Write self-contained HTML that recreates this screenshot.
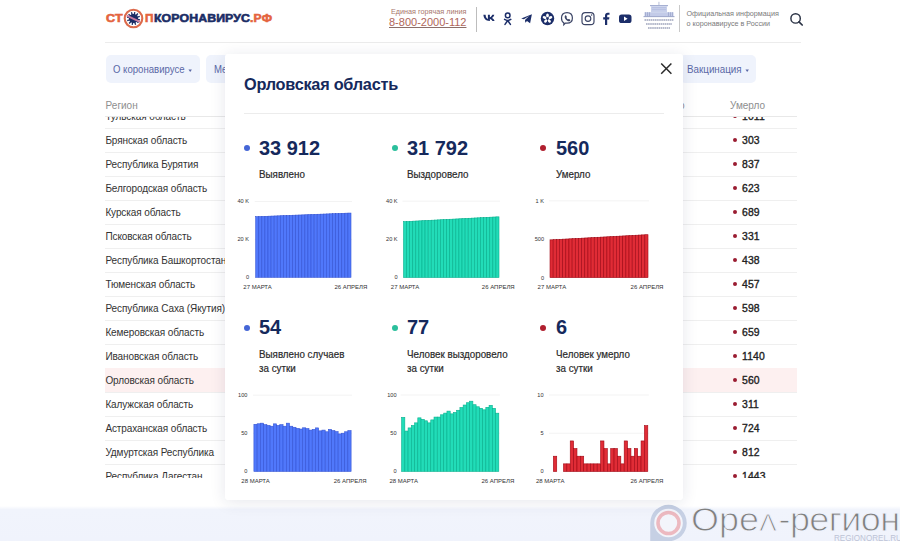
<!DOCTYPE html>
<html><head><meta charset="utf-8"><style>
html,body{margin:0;padding:0;width:900px;height:541px;overflow:hidden;background:#fff;font-family:"Liberation Sans", sans-serif;}
.t{position:absolute;white-space:nowrap;}
.r,.a{position:absolute;}
</style></head><body>
<div class="r" style="left:105px;top:42px;width:696px;height:1px;background:#ececec;"></div>
<div class="t" style="left:105.50px;top:12.82px;font-size:11.2px;line-height:11.2px;font-weight:700;color:#e4643f;letter-spacing:0.3px;transform:scaleX(1.12);transform-origin:0 0;-webkit-text-stroke:0.6px #e4643f">СТ</div>
<div class="t" style="left:145.30px;top:12.82px;font-size:11.2px;line-height:11.2px;font-weight:700;color:#e4643f;transform:scaleX(1.05);transform-origin:0 0;-webkit-text-stroke:0.6px #e4643f">П</div>
<div class="t" style="left:154.00px;top:12.82px;font-size:11.2px;line-height:11.2px;font-weight:700;color:#1b2d66;letter-spacing:0.1px;transform:scaleX(1.1);transform-origin:0 0;-webkit-text-stroke:0.6px #1b2d66">КОРОНАВИРУС</div>
<div class="t" style="left:249.50px;top:12.82px;font-size:11.2px;line-height:11.2px;font-weight:700;color:#e4643f;letter-spacing:0.2px;transform:scaleX(1.08);transform-origin:0 0;-webkit-text-stroke:0.6px #e4643f">.РФ</div>
<svg class="a" style="left:122.8px;top:7.6px" width="21" height="21" viewBox="0 0 21 21">
<circle cx="10.5" cy="10.5" r="8.8" fill="#fff" stroke="#dc6a4c" stroke-width="2.1"/>
<circle cx="10.5" cy="10.5" r="4.6" fill="#1b2d66"/>
<g stroke="#1b2d66" stroke-width="1.3"><line x1="10.5" y1="10.5" x2="16.97" y2="11.81"/><line x1="10.5" y1="10.5" x2="15.45" y2="14.87"/><line x1="10.5" y1="10.5" x2="12.60" y2="16.76"/><line x1="10.5" y1="10.5" x2="9.19" y2="16.97"/><line x1="10.5" y1="10.5" x2="6.13" y2="15.45"/><line x1="10.5" y1="10.5" x2="4.24" y2="12.60"/><line x1="10.5" y1="10.5" x2="4.03" y2="9.19"/><line x1="10.5" y1="10.5" x2="5.55" y2="6.13"/><line x1="10.5" y1="10.5" x2="8.40" y2="4.24"/><line x1="10.5" y1="10.5" x2="11.81" y2="4.03"/><line x1="10.5" y1="10.5" x2="14.87" y2="5.55"/><line x1="10.5" y1="10.5" x2="16.76" y2="8.40"/></g>
<line x1="3.8" y1="7.6" x2="17" y2="13.8" stroke="#c77aa0" stroke-width="1.9"/>
</svg>
<div class="t" style="left:391.00px;top:7.83px;font-size:8px;line-height:8px;font-weight:400;color:#a8766c;transform:scaleX(0.905);transform-origin:0 0">Единая горячая линия</div>
<div class="t" style="left:389.00px;top:16.79px;font-size:11px;line-height:11px;font-weight:400;color:#b0665a;text-decoration:underline;text-decoration-color:#8c6e6a;text-underline-offset:1px">8-800-2000-112</div>
<div class="r" style="left:476px;top:7px;width:1px;height:25px;background:#bdbdbd;"></div>
<svg class="a" style="left:480px;top:8px" width="160" height="22" viewBox="480 8 160 22">
<g fill="#1c2e69">
<path d="M483.4 14.8h2.2c.1 2.8 1.3 4 2.3 4.2v-4.2h2v2.4c1-.1 2-1.2 2.4-2.4h2c-.3 1.5-1.4 2.6-2.2 3.1.8.4 2 1.4 2.5 3.1h-2.2c-.4-1.1-1.4-2-2.5-2.1v2.1h-.3c-3.8 0-6-2.6-6.2-6.2z"/>
</g>
<g fill="none" stroke="#1c2e69" stroke-width="1.5" stroke-linecap="round">
<circle cx="507.7" cy="15.4" r="2.3"/>
<path d="M504.6 19.4c2 1.3 4.2 1.3 6.2 0M507.7 20.5l-2.7 3.9M507.7 20.5l2.7 3.9"/>
</g>
<path fill="#1c2e69" d="M521.2 18.6l10.7-4.3-1.8 8.9-3.1-2.3-1.7 1.8-.3-2.7 4.1-3.9-5.2 3.2z"/>
<circle cx="547.5" cy="18.5" r="6.7" fill="#1c2e69"/>
<g fill="#fff"><ellipse cx="547.50" cy="15.40" rx="1.9" ry="1.35" transform="rotate(-90.0 547.50 15.40)"/><ellipse cx="550.45" cy="17.54" rx="1.9" ry="1.35" transform="rotate(-18.0 550.45 17.54)"/><ellipse cx="549.32" cy="21.01" rx="1.9" ry="1.35" transform="rotate(54.0 549.32 21.01)"/><ellipse cx="545.68" cy="21.01" rx="1.9" ry="1.35" transform="rotate(126.0 545.68 21.01)"/><ellipse cx="544.55" cy="17.54" rx="1.9" ry="1.35" transform="rotate(198.0 544.55 17.54)"/></g>
<g fill="none" stroke="#3c4566" stroke-width="1.2">
<path d="M567 12.6c3.2 0 5.4 1.5 5.4 5.4s-2.2 5.2-5.4 5.2c-.6 0-1.1 0-1.6-.1l-1.6 1.6v-2c-1.6-.8-2.3-2.3-2.3-4.7 0-3.9 2.3-5.4 5.5-5.4z"/>
<rect x="582" y="12.6" width="12" height="12" rx="3.2"/>
<circle cx="588" cy="18.6" r="2.8"/>
</g>
<path fill="#3c4566" d="M565.2 15.6c.4-.4.8-.3 1 .1l.6 1c.2.4 0 .7-.3 1 .3.8.9 1.4 1.6 1.7.3-.3.6-.5 1-.3l1 .6c.4.2.4.6 0 1-.6.6-1.2.8-2 .5-1.6-.7-2.8-2-3.4-3.6-.2-.7 0-1.4.5-2z"/>
<circle cx="591.6" cy="15" r=".8" fill="#3c4566"/>
<path fill="#1c2e69" d="M605 25v-5.5h-1.8v-2.2h1.8v-1.7c0-1.9 1.1-2.9 2.8-2.9.8 0 1.5.1 1.7.1v2h-1.2c-.9 0-1.1.4-1.1 1.1v1.4h2.2l-.3 2.2h-1.9V25z"/>
<rect x="619" y="14.5" width="12.5" height="8.6" rx="2.6" fill="#1c2e69"/>
<path fill="#fff" d="M624 16.6v4.4l3.6-2.2z"/>
</svg>
<svg class="a" style="left:642px;top:0px" width="34" height="32" viewBox="0 0 34 32">
<rect x="16.6" y="1.8" width="0.7" height="3.4" fill="#9aa4c8"/>
<rect x="8" y="5" width="18" height="1.2" fill="#a6b0d2"/>
<rect x="9" y="6.2" width="16" height="6" fill="#c8d0ea"/>
<g fill="#aeb8dc"><rect x="10" y="7.4" width="14" height="0.7"/><rect x="10" y="9.4" width="14" height="0.7"/></g>
<rect x="2.5" y="12.2" width="29" height="4" fill="#c3cbe8"/>
<g fill="#98a3c8"><rect x="3.3" y="12.2" width="0.7" height="4"/><rect x="5.3" y="12.2" width="0.7" height="4"/><rect x="7.3" y="12.2" width="0.7" height="4"/><rect x="26" y="12.2" width="0.7" height="4"/><rect x="28" y="12.2" width="0.7" height="4"/><rect x="30" y="12.2" width="0.7" height="4"/></g>
<rect x="1.5" y="16.2" width="31" height="0.9" fill="#8f9bc2"/>
<g stroke="#9ea4bc" stroke-width="1.5" stroke-dasharray="1.6 0.5">
<line x1="2.5" y1="20" x2="31.5" y2="20"/>
<line x1="4" y1="24" x2="30" y2="24"/>
<line x1="6" y1="28" x2="28" y2="28"/></g>
</svg>
<div class="r" style="left:679px;top:5px;width:1px;height:27px;background:#c9c9c9;"></div>
<div class="t" style="left:686.50px;top:9.81px;font-size:7.2px;line-height:7.2px;font-weight:400;color:#7a7a7a;">Официальная информация</div>
<div class="t" style="left:686.50px;top:20.31px;font-size:7.2px;line-height:7.2px;font-weight:400;color:#7a7a7a;">о коронавирусе в России</div>
<svg class="a" style="left:788px;top:11px" width="18" height="18" viewBox="0 0 18 18">
<circle cx="7.6" cy="7.4" r="4.7" fill="none" stroke="#2b3345" stroke-width="1.45"/>
<line x1="11" y1="10.8" x2="14.2" y2="14" stroke="#2b3345" stroke-width="1.7" stroke-linecap="round"/>
</svg>
<div class="r" style="left:106px;top:55px;width:94px;height:28px;background:#eff3fc;border-radius:5px"></div>
<div class="t" style="left:113.00px;top:63.83px;font-size:10.6px;line-height:10.6px;font-weight:400;color:#5a68a6;transform:scaleX(0.905);transform-origin:0 0">О коронавирусе</div>
<svg class="a" style="left:187px;top:68px" width="6" height="5"><path d="M1.5 1.5h3.4l-1.7 2.4z" fill="#5a68a6"/></svg>
<div class="r" style="left:206px;top:55px;width:120px;height:28px;background:#eff3fc;border-radius:5px"></div>
<div class="t" style="left:214.00px;top:63.83px;font-size:10.6px;line-height:10.6px;font-weight:400;color:#5a68a6;transform:scaleX(0.905);transform-origin:0 0">Меры</div>
<div class="r" style="left:680px;top:55px;width:76px;height:28px;background:#eff3fc;border-radius:5px"></div>
<div class="t" style="left:687.40px;top:63.83px;font-size:10.6px;line-height:10.6px;font-weight:400;color:#5a68a6;transform:scaleX(0.925);transform-origin:0 0">Вакцинация</div>
<svg class="a" style="left:744px;top:68px" width="6" height="5"><path d="M1.5 1.5h3.4l-1.7 2.4z" fill="#5a68a6"/></svg>
<div class="t" style="left:105.60px;top:100.53px;font-size:10px;line-height:10px;font-weight:400;color:#8e8e8e;">Регион</div>
<div class="t" style="left:622.00px;top:100.53px;font-size:10px;line-height:10px;font-weight:400;color:#8e8e8e;">Выздоровело</div>
<div class="t" style="left:730.00px;top:100.53px;font-size:10px;line-height:10px;font-weight:400;color:#8e8e8e;">Умерло</div>
<div class="r" style="left:105px;top:116px;width:692px;height:1px;background:#e8e8e8;"></div>
<div class="a" style="left:0;top:117px;width:900px;height:361px;overflow:hidden">
<div class="r" style="left:105px;top:11px;width:692px;height:1px;background:#efefef"></div>
<div class="t" style="left:105.4px;top:-5.46px;font-size:10px;line-height:10px;color:#333;letter-spacing:-0.1px">Тульская область</div>
<div class="r" style="left:732.6px;top:-2.5999999999999996px;width:4px;height:4px;border-radius:50%;background:#9a1c31"></div>
<div class="t" style="left:742px;top:-5.46px;font-size:10.4px;line-height:10px;font-weight:400;color:#222;-webkit-text-stroke:0.35px #222;letter-spacing:0.15px">1011</div>
<div class="r" style="left:105px;top:35px;width:692px;height:1px;background:#efefef"></div>
<div class="t" style="left:105.4px;top:18.54px;font-size:10px;line-height:10px;color:#333;letter-spacing:-0.1px">Брянская область</div>
<div class="r" style="left:732.6px;top:21.4px;width:4px;height:4px;border-radius:50%;background:#9a1c31"></div>
<div class="t" style="left:742px;top:18.54px;font-size:10.4px;line-height:10px;font-weight:400;color:#222;-webkit-text-stroke:0.35px #222;letter-spacing:0.15px">303</div>
<div class="r" style="left:105px;top:59px;width:692px;height:1px;background:#efefef"></div>
<div class="t" style="left:105.4px;top:42.53px;font-size:10px;line-height:10px;color:#333;letter-spacing:-0.1px">Республика Бурятия</div>
<div class="r" style="left:732.6px;top:45.4px;width:4px;height:4px;border-radius:50%;background:#9a1c31"></div>
<div class="t" style="left:742px;top:42.53px;font-size:10.4px;line-height:10px;font-weight:400;color:#222;-webkit-text-stroke:0.35px #222;letter-spacing:0.15px">837</div>
<div class="r" style="left:105px;top:83px;width:692px;height:1px;background:#efefef"></div>
<div class="t" style="left:105.4px;top:66.53px;font-size:10px;line-height:10px;color:#333;letter-spacing:-0.1px">Белгородская область</div>
<div class="r" style="left:732.6px;top:69.4px;width:4px;height:4px;border-radius:50%;background:#9a1c31"></div>
<div class="t" style="left:742px;top:66.53px;font-size:10.4px;line-height:10px;font-weight:400;color:#222;-webkit-text-stroke:0.35px #222;letter-spacing:0.15px">623</div>
<div class="r" style="left:105px;top:107px;width:692px;height:1px;background:#efefef"></div>
<div class="t" style="left:105.4px;top:90.53px;font-size:10px;line-height:10px;color:#333;letter-spacing:-0.1px">Курская область</div>
<div class="r" style="left:732.6px;top:93.4px;width:4px;height:4px;border-radius:50%;background:#9a1c31"></div>
<div class="t" style="left:742px;top:90.53px;font-size:10.4px;line-height:10px;font-weight:400;color:#222;-webkit-text-stroke:0.35px #222;letter-spacing:0.15px">689</div>
<div class="r" style="left:105px;top:131px;width:692px;height:1px;background:#efefef"></div>
<div class="t" style="left:105.4px;top:114.53px;font-size:10px;line-height:10px;color:#333;letter-spacing:-0.1px">Псковская область</div>
<div class="r" style="left:732.6px;top:117.4px;width:4px;height:4px;border-radius:50%;background:#9a1c31"></div>
<div class="t" style="left:742px;top:114.53px;font-size:10.4px;line-height:10px;font-weight:400;color:#222;-webkit-text-stroke:0.35px #222;letter-spacing:0.15px">331</div>
<div class="r" style="left:105px;top:155px;width:692px;height:1px;background:#efefef"></div>
<div class="t" style="left:105.4px;top:138.53px;font-size:10px;line-height:10px;color:#333;letter-spacing:-0.1px">Республика Башкортостан</div>
<div class="r" style="left:732.6px;top:141.4px;width:4px;height:4px;border-radius:50%;background:#9a1c31"></div>
<div class="t" style="left:742px;top:138.53px;font-size:10.4px;line-height:10px;font-weight:400;color:#222;-webkit-text-stroke:0.35px #222;letter-spacing:0.15px">438</div>
<div class="r" style="left:105px;top:179px;width:692px;height:1px;background:#efefef"></div>
<div class="t" style="left:105.4px;top:162.53px;font-size:10px;line-height:10px;color:#333;letter-spacing:-0.1px">Тюменская область</div>
<div class="r" style="left:732.6px;top:165.4px;width:4px;height:4px;border-radius:50%;background:#9a1c31"></div>
<div class="t" style="left:742px;top:162.53px;font-size:10.4px;line-height:10px;font-weight:400;color:#222;-webkit-text-stroke:0.35px #222;letter-spacing:0.15px">457</div>
<div class="r" style="left:105px;top:203px;width:692px;height:1px;background:#efefef"></div>
<div class="t" style="left:105.4px;top:186.53px;font-size:10px;line-height:10px;color:#333;letter-spacing:-0.1px">Республика Саха (Якутия)</div>
<div class="r" style="left:732.6px;top:189.4px;width:4px;height:4px;border-radius:50%;background:#9a1c31"></div>
<div class="t" style="left:742px;top:186.53px;font-size:10.4px;line-height:10px;font-weight:400;color:#222;-webkit-text-stroke:0.35px #222;letter-spacing:0.15px">598</div>
<div class="r" style="left:105px;top:227px;width:692px;height:1px;background:#efefef"></div>
<div class="t" style="left:105.4px;top:210.53px;font-size:10px;line-height:10px;color:#333;letter-spacing:-0.1px">Кемеровская область</div>
<div class="r" style="left:732.6px;top:213.4px;width:4px;height:4px;border-radius:50%;background:#9a1c31"></div>
<div class="t" style="left:742px;top:210.53px;font-size:10.4px;line-height:10px;font-weight:400;color:#222;-webkit-text-stroke:0.35px #222;letter-spacing:0.15px">659</div>
<div class="r" style="left:105px;top:251px;width:692px;height:1px;background:#efefef"></div>
<div class="t" style="left:105.4px;top:234.53px;font-size:10px;line-height:10px;color:#333;letter-spacing:-0.1px">Ивановская область</div>
<div class="r" style="left:732.6px;top:237.4px;width:4px;height:4px;border-radius:50%;background:#9a1c31"></div>
<div class="t" style="left:742px;top:234.53px;font-size:10.4px;line-height:10px;font-weight:400;color:#222;-webkit-text-stroke:0.35px #222;letter-spacing:0.15px">1140</div>
<div class="r" style="left:105px;top:251px;width:692px;height:24px;background:#fdf0f0"></div>
<div class="r" style="left:105px;top:275px;width:692px;height:1px;background:#efefef"></div>
<div class="t" style="left:105.4px;top:258.54px;font-size:10px;line-height:10px;color:#333;letter-spacing:-0.1px">Орловская область</div>
<div class="r" style="left:732.6px;top:261.4px;width:4px;height:4px;border-radius:50%;background:#9a1c31"></div>
<div class="t" style="left:742px;top:258.54px;font-size:10.4px;line-height:10px;font-weight:400;color:#222;-webkit-text-stroke:0.35px #222;letter-spacing:0.15px">560</div>
<div class="r" style="left:105px;top:299px;width:692px;height:1px;background:#efefef"></div>
<div class="t" style="left:105.4px;top:282.54px;font-size:10px;line-height:10px;color:#333;letter-spacing:-0.1px">Калужская область</div>
<div class="r" style="left:732.6px;top:285.4px;width:4px;height:4px;border-radius:50%;background:#9a1c31"></div>
<div class="t" style="left:742px;top:282.54px;font-size:10.4px;line-height:10px;font-weight:400;color:#222;-webkit-text-stroke:0.35px #222;letter-spacing:0.15px">311</div>
<div class="r" style="left:105px;top:323px;width:692px;height:1px;background:#efefef"></div>
<div class="t" style="left:105.4px;top:306.54px;font-size:10px;line-height:10px;color:#333;letter-spacing:-0.1px">Астраханская область</div>
<div class="r" style="left:732.6px;top:309.4px;width:4px;height:4px;border-radius:50%;background:#9a1c31"></div>
<div class="t" style="left:742px;top:306.54px;font-size:10.4px;line-height:10px;font-weight:400;color:#222;-webkit-text-stroke:0.35px #222;letter-spacing:0.15px">724</div>
<div class="r" style="left:105px;top:347px;width:692px;height:1px;background:#efefef"></div>
<div class="t" style="left:105.4px;top:330.54px;font-size:10px;line-height:10px;color:#333;letter-spacing:-0.1px">Удмуртская Республика</div>
<div class="r" style="left:732.6px;top:333.4px;width:4px;height:4px;border-radius:50%;background:#9a1c31"></div>
<div class="t" style="left:742px;top:330.54px;font-size:10.4px;line-height:10px;font-weight:400;color:#222;-webkit-text-stroke:0.35px #222;letter-spacing:0.15px">812</div>
<div class="r" style="left:105px;top:371px;width:692px;height:1px;background:#efefef"></div>
<div class="t" style="left:105.4px;top:354.54px;font-size:10px;line-height:10px;color:#333;letter-spacing:-0.1px">Республика Дагестан</div>
<div class="r" style="left:732.6px;top:357.4px;width:4px;height:4px;border-radius:50%;background:#9a1c31"></div>
<div class="t" style="left:742px;top:354.54px;font-size:10.4px;line-height:10px;font-weight:400;color:#222;-webkit-text-stroke:0.35px #222;letter-spacing:0.15px">1443</div>
</div>
<div class="r" style="left:0px;top:506px;width:900px;height:35px;background:linear-gradient(#fff 0px,#f1f4fc 3.5px,#f0f3fc 100%);"></div>
<svg class="a" style="left:648px;top:502px" width="44" height="39" viewBox="0 0 44 39">
<path d="M2.25 21a18.25 18.25 0 1 1 18.25 18.25H2.25z" fill="#c6d0e4"/>
<circle cx="20.5" cy="21" r="14.3" fill="#f3f5fb"/>
<circle cx="20.5" cy="21" r="10.5" fill="none" stroke="#ecb9c0" stroke-width="3.6"/>
</svg>
<div class="t" style="left:691.00px;top:502.67px;font-size:33px;line-height:33px;font-weight:400;color:#808080;transform:scaleX(1.09);transform-origin:0 0;-webkit-text-stroke:0.9px #f0f3fc">Оре<span style="font-size:24px;margin-right:1.6px;margin-left:0.3px">Λ</span><span style="letter-spacing:-0.55px">-регион</span></div>
<div class="t" style="left:834.00px;top:533.98px;font-size:9px;line-height:9px;font-weight:400;color:#bdc3d6;transform:scaleX(0.9);transform-origin:0 0">REGIONOREL.RU</div>
<div class="a" style="left:225px;top:53.5px;width:458px;height:446.5px;background:#fff;border-radius:3px;box-shadow:0 2px 16px rgba(30,40,80,0.11)"></div>
<div class="t" style="left:244.00px;top:76.10px;font-size:16.3px;line-height:16.3px;font-weight:700;color:#15295c;letter-spacing:-0.25px">Орловская область</div>
<div class="r" style="left:244px;top:113px;width:420px;height:1px;background:#ececec;"></div>
<svg class="a" style="left:659px;top:61px" width="15" height="15"><path d="M2.2 2.5l10.2 10.2M12.4 2.5L2.2 12.7" stroke="#2a2a2a" stroke-width="1.5"/></svg>
<div class="r" style="left:243.7px;top:145.3px;width:6px;height:6px;border-radius:50%;background:#4566d6"></div>
<div class="t" style="left:258.80px;top:137.89px;font-size:20.8px;line-height:20.8px;font-weight:700;color:#15295c;transform:scaleX(0.96);transform-origin:0 0">33 912</div>
<div class="t" style="left:258.80px;top:169.33px;font-size:10.6px;line-height:10.6px;font-weight:400;color:#2a2a2a;-webkit-text-stroke:0.2px #2a2a2a;transform:scaleX(0.925);transform-origin:0 0">Выявлено</div>
<div class="r" style="left:243.7px;top:325.0px;width:6px;height:6px;border-radius:50%;background:#4566d6"></div>
<div class="t" style="left:258.80px;top:316.89px;font-size:20.8px;line-height:20.8px;font-weight:700;color:#15295c;transform:scaleX(0.96);transform-origin:0 0">54</div>
<div class="t" style="left:258.80px;top:349.13px;font-size:10.6px;line-height:10.6px;font-weight:400;color:#2a2a2a;-webkit-text-stroke:0.2px #2a2a2a;transform:scaleX(0.925);transform-origin:0 0">Выявлено случаев</div>
<div class="t" style="left:258.80px;top:363.43px;font-size:10.6px;line-height:10.6px;font-weight:400;color:#2a2a2a;-webkit-text-stroke:0.2px #2a2a2a;transform:scaleX(0.925);transform-origin:0 0">за сутки</div>
<div class="r" style="left:391.5px;top:145.3px;width:6px;height:6px;border-radius:50%;background:#2bbf9c"></div>
<div class="t" style="left:407.00px;top:137.89px;font-size:20.8px;line-height:20.8px;font-weight:700;color:#15295c;transform:scaleX(0.96);transform-origin:0 0">31 792</div>
<div class="t" style="left:407.00px;top:169.33px;font-size:10.6px;line-height:10.6px;font-weight:400;color:#2a2a2a;-webkit-text-stroke:0.2px #2a2a2a;transform:scaleX(0.925);transform-origin:0 0">Выздоровело</div>
<div class="r" style="left:391.5px;top:325.0px;width:6px;height:6px;border-radius:50%;background:#2bbf9c"></div>
<div class="t" style="left:407.00px;top:316.89px;font-size:20.8px;line-height:20.8px;font-weight:700;color:#15295c;transform:scaleX(0.96);transform-origin:0 0">77</div>
<div class="t" style="left:407.00px;top:349.13px;font-size:10.6px;line-height:10.6px;font-weight:400;color:#2a2a2a;-webkit-text-stroke:0.2px #2a2a2a;transform:scaleX(0.925);transform-origin:0 0">Человек выздоровело</div>
<div class="t" style="left:407.00px;top:363.43px;font-size:10.6px;line-height:10.6px;font-weight:400;color:#2a2a2a;-webkit-text-stroke:0.2px #2a2a2a;transform:scaleX(0.925);transform-origin:0 0">за сутки</div>
<div class="r" style="left:539.8px;top:145.3px;width:6px;height:6px;border-radius:50%;background:#b01f2f"></div>
<div class="t" style="left:555.90px;top:137.89px;font-size:20.8px;line-height:20.8px;font-weight:700;color:#15295c;transform:scaleX(0.96);transform-origin:0 0">560</div>
<div class="t" style="left:555.90px;top:169.33px;font-size:10.6px;line-height:10.6px;font-weight:400;color:#2a2a2a;-webkit-text-stroke:0.2px #2a2a2a;transform:scaleX(0.925);transform-origin:0 0">Умерло</div>
<div class="r" style="left:539.8px;top:325.0px;width:6px;height:6px;border-radius:50%;background:#b01f2f"></div>
<div class="t" style="left:555.90px;top:316.89px;font-size:20.8px;line-height:20.8px;font-weight:700;color:#15295c;transform:scaleX(0.96);transform-origin:0 0">6</div>
<div class="t" style="left:555.90px;top:349.13px;font-size:10.6px;line-height:10.6px;font-weight:400;color:#2a2a2a;-webkit-text-stroke:0.2px #2a2a2a;transform:scaleX(0.925);transform-origin:0 0">Человек умерло</div>
<div class="t" style="left:555.90px;top:363.43px;font-size:10.6px;line-height:10.6px;font-weight:400;color:#2a2a2a;-webkit-text-stroke:0.2px #2a2a2a;transform:scaleX(0.925);transform-origin:0 0">за сутки</div>
<svg class="a" style="left:0;top:0" width="900" height="541" viewBox="0 0 900 541"><rect x="254.7" y="201.00" width="97.30000000000001" height="0.8" fill="#f0f0f0"/><rect x="254.7" y="238.90" width="97.30000000000001" height="0.8" fill="#f0f0f0"/><rect x="255.70" y="216.66" width="3.07" height="60.64" fill="#5078fb" stroke="#3454d4" stroke-width="0.6"/><rect x="258.77" y="216.54" width="3.07" height="60.76" fill="#5078fb" stroke="#3454d4" stroke-width="0.6"/><rect x="261.85" y="216.42" width="3.07" height="60.88" fill="#5078fb" stroke="#3454d4" stroke-width="0.6"/><rect x="264.92" y="216.30" width="3.07" height="61.00" fill="#5078fb" stroke="#3454d4" stroke-width="0.6"/><rect x="268.00" y="216.18" width="3.07" height="61.12" fill="#5078fb" stroke="#3454d4" stroke-width="0.6"/><rect x="271.07" y="216.06" width="3.07" height="61.24" fill="#5078fb" stroke="#3454d4" stroke-width="0.6"/><rect x="274.15" y="215.94" width="3.07" height="61.36" fill="#5078fb" stroke="#3454d4" stroke-width="0.6"/><rect x="277.22" y="215.82" width="3.07" height="61.48" fill="#5078fb" stroke="#3454d4" stroke-width="0.6"/><rect x="280.29" y="215.70" width="3.07" height="61.60" fill="#5078fb" stroke="#3454d4" stroke-width="0.6"/><rect x="283.37" y="215.58" width="3.07" height="61.72" fill="#5078fb" stroke="#3454d4" stroke-width="0.6"/><rect x="286.44" y="215.46" width="3.07" height="61.84" fill="#5078fb" stroke="#3454d4" stroke-width="0.6"/><rect x="289.52" y="215.34" width="3.07" height="61.96" fill="#5078fb" stroke="#3454d4" stroke-width="0.6"/><rect x="292.59" y="215.22" width="3.07" height="62.08" fill="#5078fb" stroke="#3454d4" stroke-width="0.6"/><rect x="295.66" y="215.10" width="3.07" height="62.20" fill="#5078fb" stroke="#3454d4" stroke-width="0.6"/><rect x="298.74" y="214.98" width="3.07" height="62.32" fill="#5078fb" stroke="#3454d4" stroke-width="0.6"/><rect x="301.81" y="214.86" width="3.07" height="62.44" fill="#5078fb" stroke="#3454d4" stroke-width="0.6"/><rect x="304.89" y="214.74" width="3.07" height="62.56" fill="#5078fb" stroke="#3454d4" stroke-width="0.6"/><rect x="307.96" y="214.62" width="3.07" height="62.68" fill="#5078fb" stroke="#3454d4" stroke-width="0.6"/><rect x="311.04" y="214.50" width="3.07" height="62.80" fill="#5078fb" stroke="#3454d4" stroke-width="0.6"/><rect x="314.11" y="214.38" width="3.07" height="62.92" fill="#5078fb" stroke="#3454d4" stroke-width="0.6"/><rect x="317.18" y="214.26" width="3.07" height="63.04" fill="#5078fb" stroke="#3454d4" stroke-width="0.6"/><rect x="320.26" y="214.14" width="3.07" height="63.16" fill="#5078fb" stroke="#3454d4" stroke-width="0.6"/><rect x="323.33" y="214.02" width="3.07" height="63.28" fill="#5078fb" stroke="#3454d4" stroke-width="0.6"/><rect x="326.41" y="213.90" width="3.07" height="63.40" fill="#5078fb" stroke="#3454d4" stroke-width="0.6"/><rect x="329.48" y="213.78" width="3.07" height="63.52" fill="#5078fb" stroke="#3454d4" stroke-width="0.6"/><rect x="332.55" y="213.66" width="3.07" height="63.64" fill="#5078fb" stroke="#3454d4" stroke-width="0.6"/><rect x="335.63" y="213.54" width="3.07" height="63.76" fill="#5078fb" stroke="#3454d4" stroke-width="0.6"/><rect x="338.70" y="213.42" width="3.07" height="63.88" fill="#5078fb" stroke="#3454d4" stroke-width="0.6"/><rect x="341.78" y="213.30" width="3.07" height="64.00" fill="#5078fb" stroke="#3454d4" stroke-width="0.6"/><rect x="344.85" y="213.18" width="3.07" height="64.12" fill="#5078fb" stroke="#3454d4" stroke-width="0.6"/><rect x="347.93" y="213.06" width="3.07" height="64.24" fill="#5078fb" stroke="#3454d4" stroke-width="0.6"/></svg>
<div class="t" style="left:209px;width:40px;text-align:right;top:199.46px;font-size:5.6px;line-height:5.6px;color:#333">40 K</div>
<div class="t" style="left:209px;width:40px;text-align:right;top:237.36px;font-size:5.6px;line-height:5.6px;color:#333">20 K</div>
<div class="t" style="left:209px;width:40px;text-align:right;top:275.26px;font-size:5.6px;line-height:5.6px;color:#333">0</div>
<div class="t" style="left:243.30px;top:284.12px;font-size:6px;line-height:6px;font-weight:400;color:#333;">27 МАРТА</div>
<div class="t" style="left:334.40px;top:284.12px;font-size:6px;line-height:6px;font-weight:400;color:#333;">26 АПРЕЛЯ</div>
<svg class="a" style="left:0;top:0" width="900" height="541" viewBox="0 0 900 541"><rect x="402.5" y="200.70" width="97.5" height="0.8" fill="#f0f0f0"/><rect x="402.5" y="238.85" width="97.5" height="0.8" fill="#f0f0f0"/><rect x="403.50" y="221.61" width="3.08" height="55.89" fill="#22dcb8" stroke="#08b08e" stroke-width="0.6"/><rect x="406.58" y="221.45" width="3.08" height="56.05" fill="#22dcb8" stroke="#08b08e" stroke-width="0.6"/><rect x="409.66" y="221.29" width="3.08" height="56.21" fill="#22dcb8" stroke="#08b08e" stroke-width="0.6"/><rect x="412.74" y="221.13" width="3.08" height="56.37" fill="#22dcb8" stroke="#08b08e" stroke-width="0.6"/><rect x="415.82" y="220.97" width="3.08" height="56.53" fill="#22dcb8" stroke="#08b08e" stroke-width="0.6"/><rect x="418.90" y="220.82" width="3.08" height="56.68" fill="#22dcb8" stroke="#08b08e" stroke-width="0.6"/><rect x="421.98" y="220.66" width="3.08" height="56.84" fill="#22dcb8" stroke="#08b08e" stroke-width="0.6"/><rect x="425.06" y="220.50" width="3.08" height="57.00" fill="#22dcb8" stroke="#08b08e" stroke-width="0.6"/><rect x="428.15" y="220.34" width="3.08" height="57.16" fill="#22dcb8" stroke="#08b08e" stroke-width="0.6"/><rect x="431.23" y="220.18" width="3.08" height="57.32" fill="#22dcb8" stroke="#08b08e" stroke-width="0.6"/><rect x="434.31" y="220.02" width="3.08" height="57.48" fill="#22dcb8" stroke="#08b08e" stroke-width="0.6"/><rect x="437.39" y="219.86" width="3.08" height="57.64" fill="#22dcb8" stroke="#08b08e" stroke-width="0.6"/><rect x="440.47" y="219.70" width="3.08" height="57.80" fill="#22dcb8" stroke="#08b08e" stroke-width="0.6"/><rect x="443.55" y="219.54" width="3.08" height="57.96" fill="#22dcb8" stroke="#08b08e" stroke-width="0.6"/><rect x="446.63" y="219.38" width="3.08" height="58.12" fill="#22dcb8" stroke="#08b08e" stroke-width="0.6"/><rect x="449.71" y="219.23" width="3.08" height="58.27" fill="#22dcb8" stroke="#08b08e" stroke-width="0.6"/><rect x="452.79" y="219.07" width="3.08" height="58.43" fill="#22dcb8" stroke="#08b08e" stroke-width="0.6"/><rect x="455.87" y="218.91" width="3.08" height="58.59" fill="#22dcb8" stroke="#08b08e" stroke-width="0.6"/><rect x="458.95" y="218.75" width="3.08" height="58.75" fill="#22dcb8" stroke="#08b08e" stroke-width="0.6"/><rect x="462.03" y="218.59" width="3.08" height="58.91" fill="#22dcb8" stroke="#08b08e" stroke-width="0.6"/><rect x="465.11" y="218.43" width="3.08" height="59.07" fill="#22dcb8" stroke="#08b08e" stroke-width="0.6"/><rect x="468.19" y="218.27" width="3.08" height="59.23" fill="#22dcb8" stroke="#08b08e" stroke-width="0.6"/><rect x="471.27" y="218.11" width="3.08" height="59.39" fill="#22dcb8" stroke="#08b08e" stroke-width="0.6"/><rect x="474.35" y="217.95" width="3.08" height="59.55" fill="#22dcb8" stroke="#08b08e" stroke-width="0.6"/><rect x="477.44" y="217.80" width="3.08" height="59.70" fill="#22dcb8" stroke="#08b08e" stroke-width="0.6"/><rect x="480.52" y="217.64" width="3.08" height="59.86" fill="#22dcb8" stroke="#08b08e" stroke-width="0.6"/><rect x="483.60" y="217.48" width="3.08" height="60.02" fill="#22dcb8" stroke="#08b08e" stroke-width="0.6"/><rect x="486.68" y="217.32" width="3.08" height="60.18" fill="#22dcb8" stroke="#08b08e" stroke-width="0.6"/><rect x="489.76" y="217.16" width="3.08" height="60.34" fill="#22dcb8" stroke="#08b08e" stroke-width="0.6"/><rect x="492.84" y="217.00" width="3.08" height="60.50" fill="#22dcb8" stroke="#08b08e" stroke-width="0.6"/><rect x="495.92" y="216.84" width="3.08" height="60.66" fill="#22dcb8" stroke="#08b08e" stroke-width="0.6"/></svg>
<div class="t" style="left:357.6px;width:40px;text-align:right;top:199.16px;font-size:5.6px;line-height:5.6px;color:#333">40 K</div>
<div class="t" style="left:357.6px;width:40px;text-align:right;top:237.31px;font-size:5.6px;line-height:5.6px;color:#333">20 K</div>
<div class="t" style="left:357.6px;width:40px;text-align:right;top:275.46px;font-size:5.6px;line-height:5.6px;color:#333">0</div>
<div class="t" style="left:390.80px;top:283.92px;font-size:6px;line-height:6px;font-weight:400;color:#333;">27 МАРТА</div>
<div class="t" style="left:481.80px;top:283.92px;font-size:6px;line-height:6px;font-weight:400;color:#333;">26 АПРЕЛЯ</div>
<svg class="a" style="left:0;top:0" width="900" height="541" viewBox="0 0 900 541"><rect x="549" y="200.50" width="100" height="0.8" fill="#f0f0f0"/><rect x="549" y="238.80" width="100" height="0.8" fill="#f0f0f0"/><rect x="550.00" y="239.84" width="3.16" height="37.76" fill="#e02c36" stroke="#a00814" stroke-width="0.6"/><rect x="553.16" y="239.67" width="3.16" height="37.93" fill="#e02c36" stroke="#a00814" stroke-width="0.6"/><rect x="556.32" y="239.49" width="3.16" height="38.11" fill="#e02c36" stroke="#a00814" stroke-width="0.6"/><rect x="559.48" y="239.32" width="3.16" height="38.28" fill="#e02c36" stroke="#a00814" stroke-width="0.6"/><rect x="562.65" y="239.15" width="3.16" height="38.45" fill="#e02c36" stroke="#a00814" stroke-width="0.6"/><rect x="565.81" y="238.98" width="3.16" height="38.62" fill="#e02c36" stroke="#a00814" stroke-width="0.6"/><rect x="568.97" y="238.81" width="3.16" height="38.79" fill="#e02c36" stroke="#a00814" stroke-width="0.6"/><rect x="572.13" y="238.64" width="3.16" height="38.96" fill="#e02c36" stroke="#a00814" stroke-width="0.6"/><rect x="575.29" y="238.47" width="3.16" height="39.13" fill="#e02c36" stroke="#a00814" stroke-width="0.6"/><rect x="578.45" y="238.30" width="3.16" height="39.30" fill="#e02c36" stroke="#a00814" stroke-width="0.6"/><rect x="581.61" y="238.13" width="3.16" height="39.47" fill="#e02c36" stroke="#a00814" stroke-width="0.6"/><rect x="584.77" y="237.95" width="3.16" height="39.65" fill="#e02c36" stroke="#a00814" stroke-width="0.6"/><rect x="587.94" y="237.78" width="3.16" height="39.82" fill="#e02c36" stroke="#a00814" stroke-width="0.6"/><rect x="591.10" y="237.61" width="3.16" height="39.99" fill="#e02c36" stroke="#a00814" stroke-width="0.6"/><rect x="594.26" y="237.44" width="3.16" height="40.16" fill="#e02c36" stroke="#a00814" stroke-width="0.6"/><rect x="597.42" y="237.27" width="3.16" height="40.33" fill="#e02c36" stroke="#a00814" stroke-width="0.6"/><rect x="600.58" y="237.10" width="3.16" height="40.50" fill="#e02c36" stroke="#a00814" stroke-width="0.6"/><rect x="603.74" y="236.93" width="3.16" height="40.67" fill="#e02c36" stroke="#a00814" stroke-width="0.6"/><rect x="606.90" y="236.76" width="3.16" height="40.84" fill="#e02c36" stroke="#a00814" stroke-width="0.6"/><rect x="610.06" y="236.59" width="3.16" height="41.01" fill="#e02c36" stroke="#a00814" stroke-width="0.6"/><rect x="613.23" y="236.41" width="3.16" height="41.19" fill="#e02c36" stroke="#a00814" stroke-width="0.6"/><rect x="616.39" y="236.24" width="3.16" height="41.36" fill="#e02c36" stroke="#a00814" stroke-width="0.6"/><rect x="619.55" y="236.07" width="3.16" height="41.53" fill="#e02c36" stroke="#a00814" stroke-width="0.6"/><rect x="622.71" y="235.90" width="3.16" height="41.70" fill="#e02c36" stroke="#a00814" stroke-width="0.6"/><rect x="625.87" y="235.73" width="3.16" height="41.87" fill="#e02c36" stroke="#a00814" stroke-width="0.6"/><rect x="629.03" y="235.56" width="3.16" height="42.04" fill="#e02c36" stroke="#a00814" stroke-width="0.6"/><rect x="632.19" y="235.39" width="3.16" height="42.21" fill="#e02c36" stroke="#a00814" stroke-width="0.6"/><rect x="635.35" y="235.22" width="3.16" height="42.38" fill="#e02c36" stroke="#a00814" stroke-width="0.6"/><rect x="638.52" y="235.05" width="3.16" height="42.55" fill="#e02c36" stroke="#a00814" stroke-width="0.6"/><rect x="641.68" y="234.88" width="3.16" height="42.72" fill="#e02c36" stroke="#a00814" stroke-width="0.6"/><rect x="644.84" y="234.70" width="3.16" height="42.90" fill="#e02c36" stroke="#a00814" stroke-width="0.6"/></svg>
<div class="t" style="left:504px;width:40px;text-align:right;top:198.96px;font-size:5.6px;line-height:5.6px;color:#333">1 K</div>
<div class="t" style="left:504px;width:40px;text-align:right;top:237.26px;font-size:5.6px;line-height:5.6px;color:#333">500</div>
<div class="t" style="left:504px;width:40px;text-align:right;top:275.56px;font-size:5.6px;line-height:5.6px;color:#333">0</div>
<div class="t" style="left:537.60px;top:283.82px;font-size:6px;line-height:6px;font-weight:400;color:#333;">27 МАРТА</div>
<div class="t" style="left:630.60px;top:283.82px;font-size:6px;line-height:6px;font-weight:400;color:#333;">26 АПРЕЛЯ</div>
<svg class="a" style="left:0;top:0" width="900" height="541" viewBox="0 0 900 541"><rect x="252.9" y="394.70" width="99.20000000000002" height="0.8" fill="#f0f0f0"/><rect x="252.9" y="432.80" width="99.20000000000002" height="0.8" fill="#f0f0f0"/><rect x="253.90" y="424.31" width="3.24" height="47.09" fill="#5078fb" stroke="#3454d4" stroke-width="0.6"/><rect x="257.14" y="423.77" width="3.24" height="47.62" fill="#5078fb" stroke="#3454d4" stroke-width="0.6"/><rect x="260.38" y="423.17" width="3.24" height="48.23" fill="#5078fb" stroke="#3454d4" stroke-width="0.6"/><rect x="263.62" y="424.69" width="3.24" height="46.71" fill="#5078fb" stroke="#3454d4" stroke-width="0.6"/><rect x="266.86" y="425.45" width="3.24" height="45.95" fill="#5078fb" stroke="#3454d4" stroke-width="0.6"/><rect x="270.10" y="426.21" width="3.24" height="45.19" fill="#5078fb" stroke="#3454d4" stroke-width="0.6"/><rect x="273.34" y="423.85" width="3.24" height="47.55" fill="#5078fb" stroke="#3454d4" stroke-width="0.6"/><rect x="276.58" y="425.45" width="3.24" height="45.95" fill="#5078fb" stroke="#3454d4" stroke-width="0.6"/><rect x="279.82" y="424.69" width="3.24" height="46.71" fill="#5078fb" stroke="#3454d4" stroke-width="0.6"/><rect x="283.06" y="426.21" width="3.24" height="45.19" fill="#5078fb" stroke="#3454d4" stroke-width="0.6"/><rect x="286.30" y="423.17" width="3.24" height="48.23" fill="#5078fb" stroke="#3454d4" stroke-width="0.6"/><rect x="289.54" y="426.21" width="3.24" height="45.19" fill="#5078fb" stroke="#3454d4" stroke-width="0.6"/><rect x="292.78" y="427.28" width="3.24" height="44.12" fill="#5078fb" stroke="#3454d4" stroke-width="0.6"/><rect x="296.02" y="428.42" width="3.24" height="42.98" fill="#5078fb" stroke="#3454d4" stroke-width="0.6"/><rect x="299.26" y="429.03" width="3.24" height="42.37" fill="#5078fb" stroke="#3454d4" stroke-width="0.6"/><rect x="302.50" y="427.81" width="3.24" height="43.59" fill="#5078fb" stroke="#3454d4" stroke-width="0.6"/><rect x="305.74" y="428.58" width="3.24" height="42.82" fill="#5078fb" stroke="#3454d4" stroke-width="0.6"/><rect x="308.98" y="430.10" width="3.24" height="41.30" fill="#5078fb" stroke="#3454d4" stroke-width="0.6"/><rect x="312.22" y="429.41" width="3.24" height="41.99" fill="#5078fb" stroke="#3454d4" stroke-width="0.6"/><rect x="315.46" y="427.89" width="3.24" height="43.51" fill="#5078fb" stroke="#3454d4" stroke-width="0.6"/><rect x="318.70" y="430.86" width="3.24" height="40.54" fill="#5078fb" stroke="#3454d4" stroke-width="0.6"/><rect x="321.94" y="430.10" width="3.24" height="41.30" fill="#5078fb" stroke="#3454d4" stroke-width="0.6"/><rect x="325.18" y="431.78" width="3.24" height="39.62" fill="#5078fb" stroke="#3454d4" stroke-width="0.6"/><rect x="328.42" y="429.41" width="3.24" height="41.99" fill="#5078fb" stroke="#3454d4" stroke-width="0.6"/><rect x="331.66" y="430.63" width="3.24" height="40.77" fill="#5078fb" stroke="#3454d4" stroke-width="0.6"/><rect x="334.90" y="431.62" width="3.24" height="39.78" fill="#5078fb" stroke="#3454d4" stroke-width="0.6"/><rect x="338.14" y="433.91" width="3.24" height="37.49" fill="#5078fb" stroke="#3454d4" stroke-width="0.6"/><rect x="341.38" y="433.22" width="3.24" height="38.18" fill="#5078fb" stroke="#3454d4" stroke-width="0.6"/><rect x="344.62" y="431.78" width="3.24" height="39.62" fill="#5078fb" stroke="#3454d4" stroke-width="0.6"/><rect x="347.86" y="430.63" width="3.24" height="40.77" fill="#5078fb" stroke="#3454d4" stroke-width="0.6"/></svg>
<div class="t" style="left:207.4px;width:40px;text-align:right;top:393.16px;font-size:5.6px;line-height:5.6px;color:#333">100</div>
<div class="t" style="left:207.4px;width:40px;text-align:right;top:431.26px;font-size:5.6px;line-height:5.6px;color:#333">50</div>
<div class="t" style="left:207.4px;width:40px;text-align:right;top:469.36px;font-size:5.6px;line-height:5.6px;color:#333">0</div>
<div class="t" style="left:241.30px;top:477.72px;font-size:6px;line-height:6px;font-weight:400;color:#333;">28 МАРТА</div>
<div class="t" style="left:333.70px;top:477.72px;font-size:6px;line-height:6px;font-weight:400;color:#333;">26 АПРЕЛЯ</div>
<svg class="a" style="left:0;top:0" width="900" height="541" viewBox="0 0 900 541"><rect x="400.6" y="394.60" width="99.19999999999999" height="0.8" fill="#f0f0f0"/><rect x="400.6" y="432.75" width="99.19999999999999" height="0.8" fill="#f0f0f0"/><rect x="401.60" y="417.38" width="3.24" height="54.02" fill="#22dcb8" stroke="#08b08e" stroke-width="0.6"/><rect x="404.84" y="431.04" width="3.24" height="40.36" fill="#22dcb8" stroke="#08b08e" stroke-width="0.6"/><rect x="408.08" y="427.91" width="3.24" height="43.49" fill="#22dcb8" stroke="#08b08e" stroke-width="0.6"/><rect x="411.32" y="425.47" width="3.24" height="45.93" fill="#22dcb8" stroke="#08b08e" stroke-width="0.6"/><rect x="414.56" y="422.87" width="3.24" height="48.53" fill="#22dcb8" stroke="#08b08e" stroke-width="0.6"/><rect x="417.80" y="417.84" width="3.24" height="53.56" fill="#22dcb8" stroke="#08b08e" stroke-width="0.6"/><rect x="421.04" y="419.36" width="3.24" height="52.04" fill="#22dcb8" stroke="#08b08e" stroke-width="0.6"/><rect x="424.28" y="420.81" width="3.24" height="50.59" fill="#22dcb8" stroke="#08b08e" stroke-width="0.6"/><rect x="427.52" y="422.87" width="3.24" height="48.53" fill="#22dcb8" stroke="#08b08e" stroke-width="0.6"/><rect x="430.76" y="419.90" width="3.24" height="51.50" fill="#22dcb8" stroke="#08b08e" stroke-width="0.6"/><rect x="434.00" y="417.07" width="3.24" height="54.33" fill="#22dcb8" stroke="#08b08e" stroke-width="0.6"/><rect x="437.24" y="417.07" width="3.24" height="54.33" fill="#22dcb8" stroke="#08b08e" stroke-width="0.6"/><rect x="440.48" y="414.79" width="3.24" height="56.61" fill="#22dcb8" stroke="#08b08e" stroke-width="0.6"/><rect x="443.72" y="413.11" width="3.24" height="58.29" fill="#22dcb8" stroke="#08b08e" stroke-width="0.6"/><rect x="446.96" y="411.12" width="3.24" height="60.28" fill="#22dcb8" stroke="#08b08e" stroke-width="0.6"/><rect x="450.20" y="413.87" width="3.24" height="57.53" fill="#22dcb8" stroke="#08b08e" stroke-width="0.6"/><rect x="453.44" y="412.42" width="3.24" height="58.98" fill="#22dcb8" stroke="#08b08e" stroke-width="0.6"/><rect x="456.68" y="410.28" width="3.24" height="61.12" fill="#22dcb8" stroke="#08b08e" stroke-width="0.6"/><rect x="459.92" y="407.54" width="3.24" height="63.86" fill="#22dcb8" stroke="#08b08e" stroke-width="0.6"/><rect x="463.16" y="405.02" width="3.24" height="66.38" fill="#22dcb8" stroke="#08b08e" stroke-width="0.6"/><rect x="466.40" y="402.73" width="3.24" height="68.67" fill="#22dcb8" stroke="#08b08e" stroke-width="0.6"/><rect x="469.64" y="401.20" width="3.24" height="70.20" fill="#22dcb8" stroke="#08b08e" stroke-width="0.6"/><rect x="472.88" y="404.71" width="3.24" height="66.69" fill="#22dcb8" stroke="#08b08e" stroke-width="0.6"/><rect x="476.12" y="406.77" width="3.24" height="64.63" fill="#22dcb8" stroke="#08b08e" stroke-width="0.6"/><rect x="479.36" y="408.30" width="3.24" height="63.10" fill="#22dcb8" stroke="#08b08e" stroke-width="0.6"/><rect x="482.60" y="409.83" width="3.24" height="61.57" fill="#22dcb8" stroke="#08b08e" stroke-width="0.6"/><rect x="485.84" y="407.31" width="3.24" height="64.09" fill="#22dcb8" stroke="#08b08e" stroke-width="0.6"/><rect x="489.08" y="405.32" width="3.24" height="66.08" fill="#22dcb8" stroke="#08b08e" stroke-width="0.6"/><rect x="492.32" y="408.30" width="3.24" height="63.10" fill="#22dcb8" stroke="#08b08e" stroke-width="0.6"/><rect x="495.56" y="413.18" width="3.24" height="58.22" fill="#22dcb8" stroke="#08b08e" stroke-width="0.6"/></svg>
<div class="t" style="left:356.5px;width:40px;text-align:right;top:393.06px;font-size:5.6px;line-height:5.6px;color:#333">100</div>
<div class="t" style="left:356.5px;width:40px;text-align:right;top:431.21px;font-size:5.6px;line-height:5.6px;color:#333">50</div>
<div class="t" style="left:356.5px;width:40px;text-align:right;top:469.36px;font-size:5.6px;line-height:5.6px;color:#333">0</div>
<div class="t" style="left:389.50px;top:477.72px;font-size:6px;line-height:6px;font-weight:400;color:#333;">28 МАРТА</div>
<div class="t" style="left:481.50px;top:477.72px;font-size:6px;line-height:6px;font-weight:400;color:#333;">26 АПРЕЛЯ</div>
<svg class="a" style="left:0;top:0" width="900" height="541" viewBox="0 0 900 541"><rect x="549" y="394.60" width="99.79999999999995" height="0.8" fill="#f0f0f0"/><rect x="549" y="432.80" width="99.79999999999995" height="0.8" fill="#f0f0f0"/><rect x="553.37" y="456.22" width="3.37" height="15.28" fill="#e02c36" stroke="#a00814" stroke-width="0.6"/><rect x="563.49" y="463.86" width="3.37" height="7.64" fill="#e02c36" stroke="#a00814" stroke-width="0.6"/><rect x="566.86" y="463.86" width="3.37" height="7.64" fill="#e02c36" stroke="#a00814" stroke-width="0.6"/><rect x="570.23" y="440.94" width="3.37" height="30.56" fill="#e02c36" stroke="#a00814" stroke-width="0.6"/><rect x="573.61" y="448.58" width="3.37" height="22.92" fill="#e02c36" stroke="#a00814" stroke-width="0.6"/><rect x="576.98" y="456.22" width="3.37" height="15.28" fill="#e02c36" stroke="#a00814" stroke-width="0.6"/><rect x="580.35" y="456.22" width="3.37" height="15.28" fill="#e02c36" stroke="#a00814" stroke-width="0.6"/><rect x="583.72" y="463.86" width="3.37" height="7.64" fill="#e02c36" stroke="#a00814" stroke-width="0.6"/><rect x="587.10" y="463.86" width="3.37" height="7.64" fill="#e02c36" stroke="#a00814" stroke-width="0.6"/><rect x="590.47" y="463.86" width="3.37" height="7.64" fill="#e02c36" stroke="#a00814" stroke-width="0.6"/><rect x="593.84" y="463.86" width="3.37" height="7.64" fill="#e02c36" stroke="#a00814" stroke-width="0.6"/><rect x="597.21" y="463.86" width="3.37" height="7.64" fill="#e02c36" stroke="#a00814" stroke-width="0.6"/><rect x="600.59" y="440.94" width="3.37" height="30.56" fill="#e02c36" stroke="#a00814" stroke-width="0.6"/><rect x="603.96" y="448.58" width="3.37" height="22.92" fill="#e02c36" stroke="#a00814" stroke-width="0.6"/><rect x="607.33" y="463.86" width="3.37" height="7.64" fill="#e02c36" stroke="#a00814" stroke-width="0.6"/><rect x="610.70" y="448.58" width="3.37" height="22.92" fill="#e02c36" stroke="#a00814" stroke-width="0.6"/><rect x="614.08" y="448.58" width="3.37" height="22.92" fill="#e02c36" stroke="#a00814" stroke-width="0.6"/><rect x="617.45" y="456.22" width="3.37" height="15.28" fill="#e02c36" stroke="#a00814" stroke-width="0.6"/><rect x="620.82" y="463.86" width="3.37" height="7.64" fill="#e02c36" stroke="#a00814" stroke-width="0.6"/><rect x="624.19" y="440.94" width="3.37" height="30.56" fill="#e02c36" stroke="#a00814" stroke-width="0.6"/><rect x="627.57" y="448.58" width="3.37" height="22.92" fill="#e02c36" stroke="#a00814" stroke-width="0.6"/><rect x="630.94" y="456.22" width="3.37" height="15.28" fill="#e02c36" stroke="#a00814" stroke-width="0.6"/><rect x="634.31" y="448.58" width="3.37" height="22.92" fill="#e02c36" stroke="#a00814" stroke-width="0.6"/><rect x="637.68" y="456.22" width="3.37" height="15.28" fill="#e02c36" stroke="#a00814" stroke-width="0.6"/><rect x="641.06" y="440.94" width="3.37" height="30.56" fill="#e02c36" stroke="#a00814" stroke-width="0.6"/><rect x="644.43" y="425.66" width="3.37" height="45.84" fill="#e02c36" stroke="#a00814" stroke-width="0.6"/></svg>
<div class="t" style="left:503.5px;width:40px;text-align:right;top:393.06px;font-size:5.6px;line-height:5.6px;color:#333">10</div>
<div class="t" style="left:503.5px;width:40px;text-align:right;top:431.26px;font-size:5.6px;line-height:5.6px;color:#333">5</div>
<div class="t" style="left:503.5px;width:40px;text-align:right;top:469.46px;font-size:5.6px;line-height:5.6px;color:#333">0</div>
<div class="t" style="left:536.00px;top:477.72px;font-size:6px;line-height:6px;font-weight:400;color:#333;">28 МАРТА</div>
<div class="t" style="left:630.50px;top:477.72px;font-size:6px;line-height:6px;font-weight:400;color:#333;">26 АПРЕЛЯ</div>
</body></html>
